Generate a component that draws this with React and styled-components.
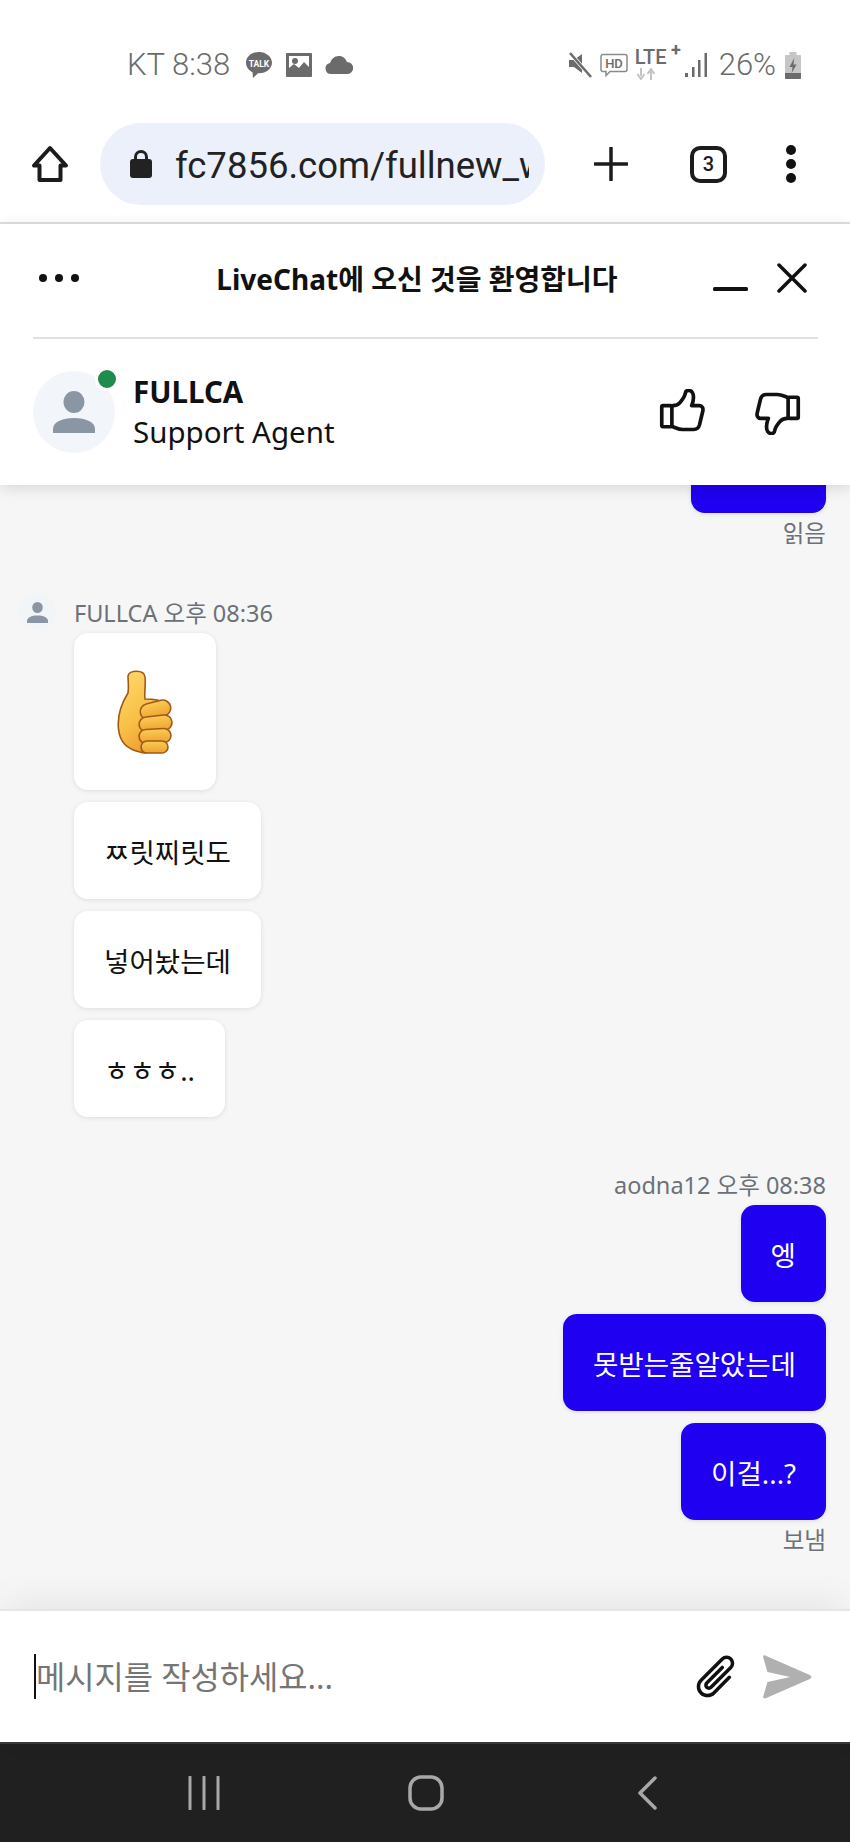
import React from 'react';
import styled, { createGlobalStyle } from 'styled-components';

const GlobalStyle = createGlobalStyle`
  html, body { margin: 0; padding: 0; background: #fff; }
  * { box-sizing: border-box; }
`;

const sans = `"Noto Sans", "Noto Sans CJK KR", sans-serif`;
const statusGray = '#6b6b6b';

const Phone = styled.div`
  width: 850px;
  height: 1842px;
  display: flex;
  flex-direction: column;
  overflow: hidden;
  background: #fff;
  font-family: ${sans};
`;

const StatusBar = styled.div`
  height: 100px;
  padding: 30px 49px 0 127px;
  display: flex;
  justify-content: space-between;
  align-items: flex-start;
  color: ${statusGray};
  font-family: Roboto, "Noto Sans", sans-serif;
  font-size: 31px;
  font-weight: 300;
`;

const StatusGroup = styled.div`
  height: 70px;
  display: flex;
  align-items: center;
  gap: ${p => p.$gap}px;
`;

const StatusText = styled.span`
  line-height: 70px;
  height: 70px;
  margin-left: ${p => p.$ml || 0}px;
  margin-right: ${p => p.$mr || 0}px;
`;

const LteBox = styled.div`
  width: 42px;
  height: 38px;
  position: relative;
  color: ${statusGray};
  font-family: Roboto, sans-serif;
  font-weight: 500;
  font-size: 20px;
  line-height: 22px;
  white-space: nowrap;
`;

const LtePlus = styled.sup`
  position: absolute;
  top: -7px;
  right: -4px;
  font-size: 18px;
  line-height: 22px;
  font-weight: 700;
`;

const BrowserBar = styled.div`
  height: 124px;
  display: flex;
  align-items: center;
  padding: 6px 0 0 31px;
  border-bottom: 2px solid #e0e0e0;
`;

const UrlPill = styled.div`
  width: 445px;
  height: 82px;
  margin-left: 31px;
  margin-right: 49px;
  padding: 0 16px 0 29px;
  border-radius: 41px;
  background: #ebf0fa;
  display: flex;
  align-items: center;
  gap: 22px;
`;

const UrlText = styled.div`
  flex: 1;
  overflow: hidden;
  white-space: nowrap;
  padding-top: 3px;
  font-family: Roboto, sans-serif;
  font-size: 36.500px;
  color: #222;
`;

const TabCount = styled.div`
  width: 37px;
  height: 37px;
  margin-left: 62px;
  margin-right: 59px;
  border: 4px solid #1c1c1c;
  border-radius: 10px;
  display: flex;
  align-items: center;
  justify-content: center;
  font-family: Roboto, sans-serif;
  font-size: 20px;
  font-weight: 500;
  color: #1c1c1c;
`;

const MenuDots = styled.div`
  display: flex;
  flex-direction: ${p => p.$row ? 'row' : 'column'};
  gap: ${p => p.$row ? 8 : 4}px;
`;

const Dot = styled.span`
  width: ${p => p.$size}px;
  height: ${p => p.$size}px;
  border-radius: 50%;
  background: #111;
`;

const ChatHeader = styled.header`
  position: relative;
  z-index: 2;
  height: 261px;
  background: #fff;
  box-shadow: 0 3px 14px rgba(0, 0, 0, 0.13);
`;

const TitleRow = styled.div`
  height: 115px;
  margin: 0 32px 0 33px;
  padding: 0 11px 5px 6px;
  border-bottom: 2px solid #e1e1e1;
  display: flex;
  align-items: center;
  justify-content: space-between;
`;

const Title = styled.h1`
  margin: 0 0 0 42px;
  font-size: 28px;
  font-weight: 600;
  color: #111;
  white-space: nowrap;
  b { font-weight: 700; }
`;

const WindowButtons = styled.div`
  display: flex;
  align-items: center;
  gap: 29px;
`;

const AgentRow = styled.div`
  height: 146px;
  padding: 0 49px 0 33px;
  display: flex;
  align-items: center;
`;

const AvatarWrap = styled.div`
  position: relative;
  width: 82px;
  height: 82px;
  border-radius: 50%;
  background: #f2f6fa;
  display: flex;
  align-items: center;
  justify-content: center;
  margin-right: 18px;
`;

const OnlineDot = styled.span`
  position: absolute;
  top: -4px;
  right: -4px;
  width: 24px;
  height: 24px;
  border-radius: 50%;
  background: #1f8b4c;
  border: 3px solid #fff;
`;

const AgentInfo = styled.div`
  flex: 1;
  display: flex;
  flex-direction: column;
  color: #111;
`;

const AgentName = styled.div`
  font-size: 29.500px;
  font-weight: 700;
  line-height: 40px;
`;

const AgentRole = styled.div`
  font-size: 29.500px;
  line-height: 40px;
`;

const RateButtons = styled.div`
  display: flex;
  align-items: center;
  gap: 50px;
`;

const Messages = styled.main`
  flex: 1;
  min-height: 0;
  overflow: hidden;
  background: #f6f6f6;
  display: flex;
  flex-direction: column;
  justify-content: flex-end;
  padding: 0 24px 55px 18px;
`;

const Group = styled.section`
  display: flex;
  flex-direction: column;
  align-items: ${p => p.$own ? 'flex-end' : 'flex-start'};
  margin-bottom: ${p => p.$last ? 0 : p.$gap}px;
`;

const Meta = styled.div`
  display: flex;
  align-items: center;
  gap: 18px;
  height: 28px;
  margin-bottom: 7px;
  font-size: 23.500px;
  color: #6c7178;
`;

const MetaAvatar = styled.div`
  width: 38px;
  height: 38px;
  border-radius: 50%;
  background: #f2f5f8;
  display: flex;
  align-items: center;
  justify-content: center;
`;

const Stack = styled.div`
  display: flex;
  flex-direction: column;
  align-items: inherit;
  gap: 12px;
`;

const Bubble = styled.div`
  min-height: 97px;
  width: ${p => p.$width ? `${p.$width}px` : 'auto'};
  margin-left: ${p => p.$own ? 0 : 56}px;
  padding: 0 30px;
  display: flex;
  align-items: center;
  border-radius: 14px;
  font-size: 27.600px;
  white-space: nowrap;
  background: ${p => p.$own ? '#2000f0' : '#fff'};
  color: ${p => p.$own ? '#fff' : '#111'};
  box-shadow: 0 1px 5px rgba(0, 0, 0, 0.1);
`;

const EmojiBubble = styled(Bubble)`
  width: 142px;
  height: 157px;
  justify-content: center;
  padding: 0;
`;

const Status = styled.div`
  margin-top: 6px;
  height: 28px;
  line-height: 28px;
  font-size: 23.500px;
  color: #6c7178;
`;

const Composer = styled.footer`
  position: relative;
  z-index: 1;
  height: 133px;
  padding: 0 38px 0 34px;
  background: #fff;
  border-top: 2px solid #e6e6e6;
  box-shadow: 0 -8px 40px -6px rgba(0, 0, 0, 0.09);
  display: flex;
  align-items: center;
`;

const Placeholder = styled.div`
  flex: 1;
  height: 45px;
  border-left: 2px solid #111;
  font-size: 31.800px;
  line-height: 45px;
  color: #757575;
  white-space: nowrap;
`;

const NavBar = styled.nav`
  height: 100px;
  background: #202020;
  border-top: 2px solid #3a3a3a;
  padding: 0 193px 0 188px;
  display: flex;
  align-items: center;
  justify-content: space-between;
`;

const Icon = styled.svg`
  display: block;
  flex: none;
  margin-left: ${p => p.$ml || 0}px;
  margin-right: ${p => p.$mr || 0}px;
  transform: ${p => p.$flip ? 'rotate(180deg)' : 'none'};
`;

const TalkIcon = () => (
  <Icon width="28" height="28" viewBox="0 0 28 28">
    <path d="M14 1C6.8 1 1 5.5 1 11.8c0 4.200 2.700 7.600 6.500 9.400L8 27l5-4.800c.4 0 .7.100 1 .100 7.200 0 13-4.700 13-10.500S21.200 1 14 1z" fill={statusGray} />
    <text x="14" y="15.500" textAnchor="middle" fontSize="8.500" fontWeight="700" fill="#fff" fontFamily="Roboto, sans-serif">TALK</text>
  </Icon>
);

const ImageIcon = () => (
  <Icon width="26" height="24" viewBox="0 0 26 24">
    <path fillRule="evenodd" fill={statusGray} d="M1 0h24a1 1 0 0 1 1 1v22a1 1 0 0 1-1 1H1a1 1 0 0 1-1-1V1a1 1 0 0 1 1-1zm2 3v12l5-4 5 4 5-6 5 5V3H3z" />
    <circle cx="9" cy="8" r="3" fill={statusGray} />
  </Icon>
);

const CloudIcon = () => (
  <Icon width="28" height="18" viewBox="0 0 28 18">
    <path d="M6 18a5.500 5.500 0 0 1-1-10.900A9 9 0 0 1 14 0c3.800 0 6.700 2.400 7.800 6A6 6 0 0 1 22.500 18H6z" fill={statusGray} />
  </Icon>
);

const MuteIcon = () => (
  <Icon width="26" height="26" viewBox="0 0 26 26">
    <path d="M2 8h5l8-6v19l-8-6H2z" fill={statusGray} />
    <path d="M3 1l21 24" stroke="#fff" strokeWidth="4" />
    <path d="M3 1l21 24" stroke={statusGray} strokeWidth="2.500" />
  </Icon>
);

const HdIcon = () => (
  <Icon width="28" height="24" viewBox="0 0 28 24">
    <path d="M3 1.500h22a2 2 0 0 1 2 2v13a2 2 0 0 1-2 2H10L6 22.500v-4H3a2 2 0 0 1-2-2v-13a2 2 0 0 1 2-2z" fill="none" stroke="#8a8a8a" strokeWidth="1.500" />
    <text x="14" y="15" textAnchor="middle" fontSize="13" fontWeight="500" fill={statusGray} fontFamily="Roboto, sans-serif">HD</text>
  </Icon>
);

const LteArrows = () => (
  <Icon width="22" height="12" viewBox="0 0 22 12">
    <path d="M6 0v8M2.500 6L6 11l3.500-5M16 12V3M12.500 6L16 1l3.500 5" fill="none" stroke="#c4c4c4" strokeWidth="2" />
  </Icon>
);

const SignalIcon = () => (
  <Icon width="24" height="24" viewBox="0 0 24 24">
    <rect x="1" y="20" width="3" height="4" fill={statusGray} />
    <rect x="8" y="14" width="2.500" height="10" fill={statusGray} />
    <rect x="14" y="7" width="2.500" height="17" fill={statusGray} />
    <rect x="20.500" y="0" width="2.500" height="24" fill={statusGray} />
  </Icon>
);

const BatteryIcon = () => (
  <Icon width="16" height="27" viewBox="0 0 18 27" preserveAspectRatio="none">
    <path d="M5 0h8v3h4a1 1 0 0 1 1 1v22a1 1 0 0 1-1 1H1a1 1 0 0 1-1-1V4a1 1 0 0 1 1-1h4z" fill="#c6c6c6" />
    <path d="M0 21h18v5a1 1 0 0 1-1 1H1a1 1 0 0 1-1-1z" fill={statusGray} />
    <path d="M10.500 6L5 15h3.500L7.500 21 13 12.500H9.500z" fill={statusGray} />
  </Icon>
);

const HomeIcon = () => (
  <Icon width="38" height="38" viewBox="0 0 38 38">
    <path d="M19 3L3 20.500h5.500V35h21V20.500H35z" fill="none" stroke="#1c1c1c" strokeWidth="4" strokeLinejoin="round" />
  </Icon>
);

const LockIcon = () => (
  <Icon width="24" height="30" viewBox="0 0 24 30">
    <path d="M6.500 11V8a5.500 5.500 0 0 1 11 0v3" fill="none" stroke="#222" strokeWidth="3" />
    <rect x="1" y="10" width="22" height="19" rx="3" fill="#222" />
  </Icon>
);

const PlusIcon = () => (
  <Icon width="34" height="34" viewBox="0 0 34 34">
    <path d="M17 1v32M1 17h32" stroke="#1c1c1c" strokeWidth="3.500" strokeLinecap="round" />
  </Icon>
);

const MinimizeIcon = () => (
  <Icon width="35" height="30" viewBox="0 0 35 30">
    <rect x="0" y="24" width="35" height="4" rx="1.500" fill="#111" />
  </Icon>
);

const CloseIcon = () => (
  <Icon width="30" height="30" viewBox="0 0 30 30">
    <path d="M2 2l26 26M28 2L2 28" stroke="#111" strokeWidth="3.500" strokeLinecap="round" />
  </Icon>
);

const PersonIcon = ({ size }) => (
  <Icon width={size} height={size} viewBox="0 0 42 42">
    <ellipse cx="21" cy="11" rx="10.500" ry="11" fill="#8a96a3" />
    <path d="M0 42v-4c0-7 9-11 21-11s21 4 21 11v4z" fill="#8a96a3" />
  </Icon>
);

const thumbPath = 'M15 18c3.500 0 6-1 8-3.500 3-3.500 5-6 5.500-9.500.3-2.500 1.500-3.500 3.500-3.500 3.500 0 5.500 3 5.500 7.500 0 3-.8 6-2 9H44c3 0 4.500 3 3.500 6.500L44 39c-.8 3-3 5-6.500 5H26c-4 0-7-1.500-11-3';

const ThumbIcon = ({ flip }) => (
  <Icon width="46" height="46" viewBox="0 0 50 50" $flip={flip}>
    <path d={thumbPath} fill="none" stroke="#111" strokeWidth="4" strokeLinejoin="round" strokeLinecap="round" />
    <rect x="3" y="18" width="11" height="23" rx="1.500" fill="none" stroke="#111" strokeWidth="4" />
  </Icon>
);

const ThumbEmoji = () => (
  <Icon width="58" height="86" viewBox="-2 -2 58 86">
    <defs>
      <linearGradient id="thumbFill" x1="0.2" y1="0" x2="0.7" y2="1">
        <stop offset="0" stopColor="#fdd86a" />
        <stop offset="0.55" stopColor="#f8bf45" />
        <stop offset="1" stopColor="#e9982c" />
      </linearGradient>
      <linearGradient id="fingerFill" x1="0" y1="0" x2="0" y2="1">
        <stop offset="0" stopColor="#fbcb55" />
        <stop offset="1" stopColor="#eda232" />
      </linearGradient>
    </defs>
    <path d="M10 5C11-1 26-2 27 6c1 8-1 16 0 22 6 0 15 0 19 4l-6 38c-4 12-12 13-18 11C12 79 2 74 .5 58-1 44 5 30 10 22c1-6 0-12 0-17z" fill="url(#thumbFill)" stroke="#a05a16" strokeWidth="1.600" />
    <rect x="22" y="31" width="31" height="16" rx="8" transform="rotate(-14 37 39)" fill="url(#fingerFill)" stroke="#a05a16" strokeWidth="1.600" />
    <rect x="21" y="45" width="33" height="15" rx="7.500" transform="rotate(-6 37 52)" fill="url(#fingerFill)" stroke="#a05a16" strokeWidth="1.600" />
    <rect x="21" y="58" width="32" height="14" rx="7" transform="rotate(-3 37 65)" fill="url(#fingerFill)" stroke="#a05a16" strokeWidth="1.600" />
    <rect x="23" y="70" width="27" height="12" rx="6" fill="url(#fingerFill)" stroke="#a05a16" strokeWidth="1.600" />
  </Icon>
);

const ClipIcon = () => (
  <Icon width="46" height="46" viewBox="-1 -2.500 46 46">
    <path d="M31 12v22a9 9 0 0 1-18 0V4a6 6 0 0 1 12 0v28a3 3 0 0 1-6 0V10" fill="none" stroke="#111" strokeWidth="3.500" strokeLinecap="round" transform="rotate(45 22 20.500)" />
  </Icon>
);

const SendIcon = () => (
  <Icon width="50" height="44" viewBox="0 0 46 44" $ml={22} preserveAspectRatio="none">
    <path d="M1 2c0-2 2-2 3-1l40 19c2 1 2 3 0 4L4 43c-1 1-3 0-3-1l4-15 21-5-21-5z" fill="#b0b0b0" />
  </Icon>
);

const NavLines = () => (
  <Icon width="32" height="34" viewBox="0 0 32 34">
    <path d="M2 1v32M16 1v32M30 1v32" stroke="#a8a8a8" strokeWidth="3" strokeLinecap="round" />
  </Icon>
);

const NavHome = () => (
  <Icon width="36" height="36" viewBox="0 0 36 36" $mr={6}>
    <rect x="2" y="2" width="32" height="32" rx="11" fill="none" stroke="#a8a8a8" strokeWidth="3.500" />
  </Icon>
);

const NavBack = () => (
  <Icon width="20" height="34" viewBox="0 0 20 34">
    <path d="M18 2L3 17l15 15" fill="none" stroke="#a8a8a8" strokeWidth="3.500" strokeLinecap="round" strokeLinejoin="round" />
  </Icon>
);

export default function App() {
  return (
    <Phone>
      <GlobalStyle />
      <StatusBar>
        <StatusGroup $gap={13}>
          <StatusText $mr={2}>KT 8:38</StatusText>
          <TalkIcon />
          <ImageIcon />
          <CloudIcon />
        </StatusGroup>
        <StatusGroup $gap={7}>
          <MuteIcon />
          <HdIcon />
          <LteBox>
            LTE<LtePlus>+</LtePlus>
            <LteArrows />
          </LteBox>
          <SignalIcon />
          <StatusText $ml={4} $mr={2}>26%</StatusText>
          <BatteryIcon />
        </StatusGroup>
      </StatusBar>

      <BrowserBar>
        <HomeIcon />
        <UrlPill>
          <LockIcon />
          <UrlText>fc7856.com/fullnew_w</UrlText>
        </UrlPill>
        <PlusIcon />
        <TabCount>3</TabCount>
        <MenuDots>
          <Dot $size={10} />
          <Dot $size={10} />
          <Dot $size={10} />
        </MenuDots>
      </BrowserBar>

      <ChatHeader>
        <TitleRow>
          <MenuDots $row>
            <Dot $size={8} />
            <Dot $size={8} />
            <Dot $size={8} />
          </MenuDots>
          <Title><b>LiveChat</b>에 오신 것을 환영합니다</Title>
          <WindowButtons>
            <MinimizeIcon />
            <CloseIcon />
          </WindowButtons>
        </TitleRow>
        <AgentRow>
          <AvatarWrap>
            <PersonIcon size={42} />
            <OnlineDot />
          </AvatarWrap>
          <AgentInfo>
            <AgentName>FULLCA</AgentName>
            <AgentRole>Support Agent</AgentRole>
          </AgentInfo>
          <RateButtons>
            <ThumbIcon />
            <ThumbIcon flip />
          </RateButtons>
        </AgentRow>
      </ChatHeader>

      <Messages>
        <Group $own $gap={51}>
          <Bubble $own $width={135} />
          <Status>읽음</Status>
        </Group>
        <Group $gap={53}>
          <Meta>
            <MetaAvatar>
              <PersonIcon size={21} />
            </MetaAvatar>
            <span>FULLCA 오후 08:36</span>
          </Meta>
          <Stack>
            <EmojiBubble><ThumbEmoji /></EmojiBubble>
            <Bubble>ㅉ릿찌릿도</Bubble>
            <Bubble>넣어놨는데</Bubble>
            <Bubble>ㅎㅎㅎ..</Bubble>
          </Stack>
        </Group>
        <Group $own $last>
          <Meta>aodna12 오후 08:38</Meta>
          <Stack>
            <Bubble $own>엥</Bubble>
            <Bubble $own>못받는줄알았는데</Bubble>
            <Bubble $own>이걸...?</Bubble>
          </Stack>
          <Status>보냄</Status>
        </Group>
      </Messages>

      <Composer>
        <Placeholder>메시지를 작성하세요...</Placeholder>
        <ClipIcon />
        <SendIcon />
      </Composer>

      <NavBar>
        <NavLines />
        <NavHome />
        <NavBack />
      </NavBar>
    </Phone>
  );
}
